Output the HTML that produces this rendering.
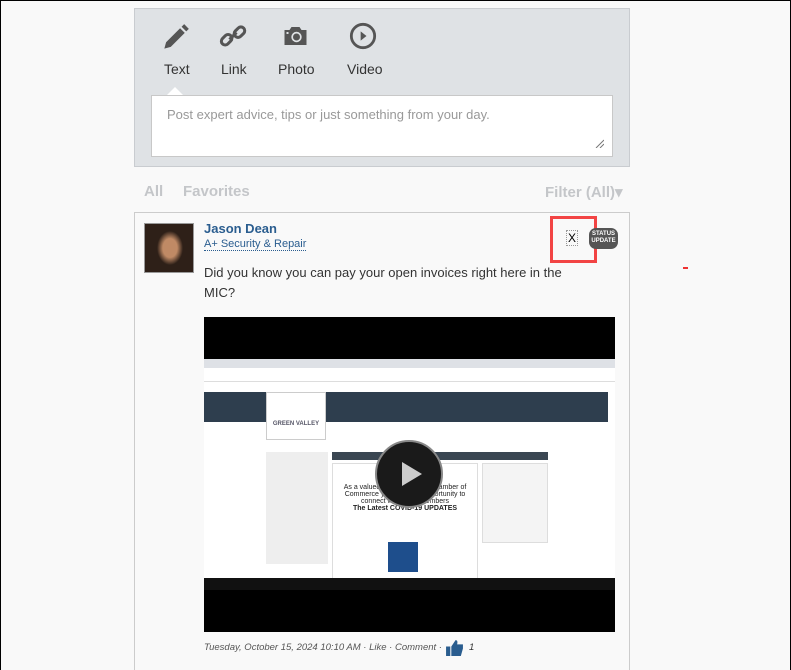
<!DOCTYPE html>
<html><head><meta charset="utf-8"><style>
*{box-sizing:border-box;margin:0;padding:0}
html,body{width:791px;height:670px;overflow:hidden}
body{background:#f9f9f9;font-family:"Liberation Sans",sans-serif;position:relative;border:1px solid #000;border-bottom:none}
.abs{position:absolute}
.panel{left:133px;top:7px;width:496px;height:159px;background:#dfe2e5;border:1px solid #c9ccd0}
.lbl{font-size:14px;color:#333;top:52px}
.ta{left:16px;top:86px;width:462px;height:62px;background:#fff;border:1px solid #c8c8c8;font-size:13px;color:#999;padding:11px 15px}
.tabs{top:182px;font-size:15px;font-weight:bold;color:#c4c6c9}
.post{left:133px;top:211px;width:496px;height:460px;border-top:1px solid #ccc;border-left:1px solid #ccc;border-right:1px solid #ccc}
</style></head><body>
<div class="abs panel">
 <svg class="abs" style="left:27px;top:14px" width="28" height="28" viewBox="0 0 24 24"><path d="M2 22l1.5-5.5L15.5 4.5l4 4L7.5 20.5z M16.8 3.2l2.2-2.2 4 4-2.2 2.2z" fill="#555"/></svg>
 <svg class="abs" style="left:84px;top:13px" width="28" height="28" viewBox="0 0 24 24" fill="none" stroke="#555" stroke-width="2.6"><rect x="1.5" y="12" width="10" height="6.5" rx="3.2" transform="rotate(-45 6.5 15.2)"/><rect x="12.5" y="5.5" width="10" height="6.5" rx="3.2" transform="rotate(-45 17.5 8.7)"/><path d="M9 15l6-6"/></svg>
 <svg class="abs" style="left:148px;top:16px" width="25" height="22" viewBox="0 0 24 22"><path d="M1 5h5l2-3h8l2 3h5v15H1z" fill="#555"/><circle cx="13" cy="12" r="5.2" fill="#dfe2e5"/><circle cx="13" cy="12" r="3.5" fill="#555"/><rect x="3" y="7" width="2" height="2" fill="#dfe2e5"/></svg>
 <svg class="abs" style="left:214px;top:13px" width="28" height="28" viewBox="0 0 24 24"><circle cx="12" cy="12" r="10" fill="none" stroke="#555" stroke-width="2.4"/><path d="M10 8l5 4-5 4z" fill="#555"/></svg>
 <div class="abs lbl" style="left:29px">Text</div>
 <div class="abs lbl" style="left:86px">Link</div>
 <div class="abs lbl" style="left:143px">Photo</div>
 <div class="abs lbl" style="left:212px">Video</div>
 <div class="abs" style="left:31px;top:78px;width:0;height:0;border-left:9px solid transparent;border-right:9px solid transparent;border-bottom:9px solid #fff"></div>
 <div class="abs ta">Post expert advice, tips or just something from your day.
  <svg class="abs" style="right:8px;bottom:8px" width="9" height="9"><path d="M9 1L1 9M9 5L5 9" stroke="#777"/></svg></div>
</div>
<div class="abs tabs" style="left:143px">All</div>
<div class="abs tabs" style="left:182px">Favorites</div>
<div class="abs tabs" style="left:544px">Filter (All)▾</div>
<div class="abs post"></div>
<div class="abs" style="left:143px;top:222px;width:50px;height:50px;border:1px solid #999;background:radial-gradient(ellipse 13px 17px at 25px 24px,#c08a65 55%,#2e2018 100%),#4a6470"></div>
<div class="abs" style="left:203px;top:220px;font-size:13px;font-weight:bold;color:#2a5d8f">Jason Dean</div>
<div class="abs" style="left:203px;top:237px;font-size:11px;color:#2a5d8f;border-bottom:1px dotted #2a5d8f;line-height:12px">A+ Security &amp; Repair</div>
<div class="abs" style="left:203px;top:262px;width:360px;font-size:13px;line-height:20px;color:#333">Did you know you can pay your open invoices right here in the MIC?</div>
<div class="abs" style="left:549px;top:215px;width:47px;height:47px;border:3px solid #f24444"></div>
<div class="abs" style="left:565px;top:229px;font-size:12px;color:#000;border:1px dotted #999;padding:0 1px">X</div>
<div class="abs" style="left:588px;top:227px;width:29px;height:21px;border-radius:7px;background:#555;color:#fff;font-size:6px;font-weight:bold;text-align:center;line-height:7px;padding-top:3px">STATUS<br>UPDATE</div>
<div class="abs" style="left:682px;top:266px;width:5px;height:2px;background:#e33"></div>
<div class="abs" style="left:203px;top:316px;width:411px;height:315px;background:#000"></div>
<div class="abs" style="left:203px;top:358px;width:411px;height:231px;background:#fff;overflow:hidden">
 <div class="abs" style="left:0;top:0;width:411px;height:9px;background:#dee1e6"></div>
 <div class="abs" style="left:0;top:9px;width:411px;height:14px;background:#fff;border-bottom:1px solid #ddd"></div>
 <div class="abs" style="left:0;top:33px;width:404px;height:30px;background:#2e3e4e"></div>
 <div class="abs" style="left:62px;top:33px;width:60px;height:48px;background:#fff;border:1px solid #ccc;font-size:6px;font-weight:bold;color:#556;text-align:center;padding-top:28px">GREEN VALLEY</div>
 <div class="abs" style="left:62px;top:93px;width:62px;height:112px;background:#eee"></div>
 <div class="abs" style="left:128px;top:93px;width:216px;height:8px;background:#3a4652"></div>
 <div class="abs" style="left:278px;top:104px;width:66px;height:80px;background:#f4f4f4;border:1px solid #ddd"></div>
 <div class="abs" style="left:128px;top:104px;width:146px;height:126px;background:#fff;border:1px solid #ddd;font-size:7px;text-align:center;color:#222;padding-top:20px">As a valued member of our Chamber of Commerce you have the opportunity to connect with other members<br><b>The Latest COVID-19 UPDATES</b></div>
 <div class="abs" style="left:184px;top:183px;width:30px;height:30px;background:#1e4e8c"></div>
 <div class="abs" style="left:0;top:219px;width:411px;height:12px;background:#111"></div>
</div>
<div class="abs" style="left:374px;top:439px;width:68px;height:68px;border-radius:50%;background:#1a1a1a;border:2px solid #888"></div>
<svg class="abs" style="left:374px;top:439px" width="68" height="68"><path d="M27 22l20 12-20 12z" fill="#ccc"/></svg>
<div class="abs" style="left:203px;top:637px;font-size:9.5px;font-style:italic;color:#555;white-space:nowrap;display:flex;align-items:center;gap:3px"><span>Tuesday, October 15, 2024 10:10 AM · Like · Comment ·</span><svg width="19" height="19" viewBox="0 0 18 18"><path d="M1 8h4v9H1zM6 8l4-6c2 0 2 2 1.5 4H17v4l-2 7H6z" fill="#2a5d8f"/></svg><span style="color:#333;margin-left:2px">1</span></div>
</body></html>
